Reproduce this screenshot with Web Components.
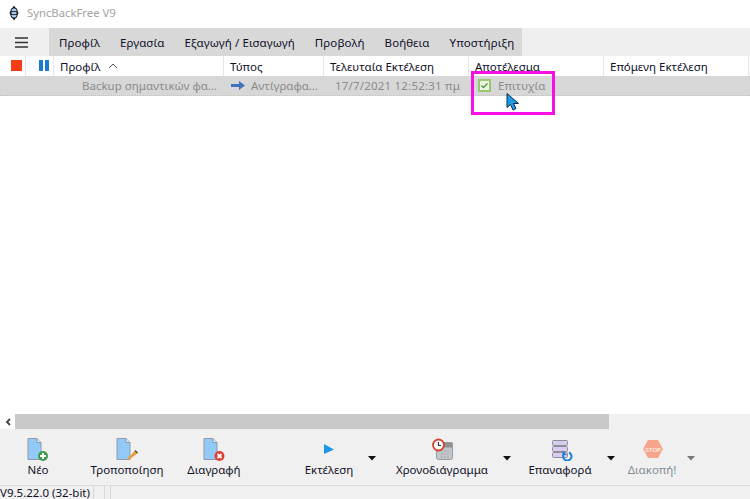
<!DOCTYPE html>
<html lang="el">
<head>
<meta charset="utf-8">
<title>SyncBackFree V9</title>
<style>
  html, body { margin: 0; height: 100%; }
  body {
    width: 750px;
    height: 499px;
    overflow: hidden;
    background: #fff;
    font-family: "Noto Sans", "Open Sans", sans-serif;
    font-size: 11.5px;
    color: #10102a;
  }
  sb-app { height: 499px; }
</style>
</head>
<body>
<sb-app>
  <sb-titlebar slot="top">SyncBackFree V9</sb-titlebar>
  <sb-menubar slot="top">
    <span>Προφίλ</span><span>Εργασία</span><span>Εξαγωγή / Εισαγωγή</span><span>Προβολή</span><span>Βοήθεια</span><span>Υποστήριξη</span>
  </sb-menubar>
  <sb-listheader slot="top"></sb-listheader>
  <sb-listrow slot="top"></sb-listrow>

  <sb-scrollbar slot="bottom"></sb-scrollbar>
  <sb-toolbar slot="bottom">
    <sb-toolbutton icon="new" style="--w:76px">Νέο</sb-toolbutton>
    <sb-toolbutton icon="edit" style="--w:102px">Τροποποίηση</sb-toolbutton>
    <sb-toolbutton icon="delete" style="--w:72px">Διαγραφή</sb-toolbutton>
    <sb-toolbutton icon="run" caret style="--w:66px;--ml:46px;--cm:2px">Εκτέλεση</sb-toolbutton>
    <sb-toolbutton icon="schedule" caret style="--w:112px;--ml:6px;--cm:1px">Χρονοδιάγραμμα</sb-toolbutton>
    <sb-toolbutton icon="restore" caret style="--w:80px;--ml:5px;--cm:3px">Επαναφορά</sb-toolbutton>
    <sb-toolbutton icon="stop" caret disabled style="--w:56px;--ml:5px;--cm:3px">Διακοπή!</sb-toolbutton>
  </sb-toolbar>
  <sb-statusbar slot="bottom">V9.5.22.0 (32-bit)</sb-statusbar>

  <sb-highlight slot="over"></sb-highlight>
</sb-app>

<script>
class SbApp extends HTMLElement {
  constructor() {
    super();
    this.attachShadow({ mode: 'open' }).innerHTML = `
      <style>
        :host { display: flex; flex-direction: column; position: relative; overflow: hidden; }
        .list { flex: 1; background: #fff; }
      </style>
      <slot name="top"></slot>
      <div class="list"></div>
      <slot name="bottom"></slot>
      <slot name="over"></slot>
    `;
  }
}

class SbTitlebar extends HTMLElement {
  constructor() {
    super();
    this.attachShadow({ mode: 'open' }).innerHTML = `
      <style>
        :host { display: flex; align-items: center; height: 28px; padding: 0 0 3px 9px; box-sizing: border-box; gap: 8px; color: #a2a2a2; background: #fff; font-size: 11.3px; }
        svg { display: block; }
      </style>
      <svg width="10" height="16" viewBox="0 0 10 16">
        <path d="M5 0.500 9.500 8 5 15.500 0.500 8z" fill="#111"/>
        <rect x="2" y="3" width="6" height="10" rx="2.500" fill="#a4c8ec" stroke="#111"/>
        <path d="M2 6.500h6M2 9.500h6" stroke="#111" stroke-width="0.800"/>
      </svg>
      <slot></slot>
    `;
  }
}

class SbMenubar extends HTMLElement {
  constructor() {
    super();
    this.attachShadow({ mode: 'open' }).innerHTML = `
      <style>
        :host { display: flex; height: 28px; background: #efefef; }
        .burger { width: 49px; display: flex; align-items: center; justify-content: center; padding-right: 7px; box-sizing: border-box; }
        .tabs { width: 473px; background: #d8d8d8; display: flex; align-items: center; padding-left: 10px; box-sizing: border-box; gap: 20px; letter-spacing: 0.1px; white-space: nowrap; }
        svg { display: block; }
      </style>
      <div class="burger">
        <svg width="13" height="11" viewBox="0 0 13 11"><path d="M0 1h13M0 5.500h13M0 10h13" stroke="#333" stroke-width="1.600"/></svg>
      </div>
      <div class="tabs"><slot></slot></div>
    `;
  }
}

class SbListheader extends HTMLElement {
  constructor() {
    super();
    this.attachShadow({ mode: 'open' }).innerHTML = `
      <style>
        :host { display: grid; grid-template-columns: 26px 28px 170px 100px 145px 135px 145px 1fr; height: 20px; background: #fff; }
        div { display: flex; align-items: center; border-right: 1px solid #e6e6e6; padding-left: 6px; box-sizing: border-box; white-space: nowrap; }
        .mark { padding: 0 0 2px 11px; }
        .pause { padding-left: 13px; }
        svg { display: block; }
        .sort { margin-left: 8px; }
      </style>
      <div class="mark"><svg width="11" height="11"><rect width="11" height="11" fill="#f63c14"/></svg></div>
      <div class="mark pause"><svg width="10" height="11"><path d="M0 0h4v11H0zM6 0h4v11H6z" fill="#1b7ad2"/></svg></div>
      <div>Προφίλ<svg class="sort" width="10" height="6" viewBox="0 0 10 6"><path d="M1 5 5 1l4 4" fill="none" stroke="#555"/></svg></div>
      <div>Τύπος</div>
      <div>Τελευταία Εκτέλεση</div>
      <div>Αποτέλεσμα</div>
      <div>Επόμενη Εκτέλεση</div>
    `;
  }
}

class SbListrow extends HTMLElement {
  constructor() {
    super();
    this.attachShadow({ mode: 'open' }).innerHTML = `
      <style>
        :host { display: grid; grid-template-columns: 224px 100px 145px 281px; height: 20px; box-sizing: border-box; background: #d7d7d7; border-bottom: 1px dotted #c4c4c4; color: #8b8b8b; }
        div { display: flex; align-items: center; white-space: nowrap; padding-bottom: 1px; box-sizing: border-box; }
        .name { padding-left: 82px; }
        .type { padding-left: 7px; gap: 6px; }
        .date { padding-left: 11px; letter-spacing: 0.2px; }
        .res { padding-left: 9px; gap: 7px; }
        svg { display: block; }
      </style>
      <div class="name">Backup σημαντικών φα...</div>
      <div class="type"><svg width="14" height="9" viewBox="0 0 14 9"><path d="M0 3h8V0l6 4.500L8 9V6H0z" fill="#3f74bd"/></svg>Αντίγραφα...</div>
      <div class="date">17/7/2021 12:52:31 πμ</div>
      <div class="res"><svg width="13" height="13" viewBox="0 0 13 13"><rect x="1" y="1" width="11" height="11" fill="#eef5e6" stroke="#9cc56f" stroke-width="2"/><path d="M3.500 6.500 5.500 8.500 9.500 4.500" fill="none" stroke="#4f9a3c" stroke-width="1.400"/></svg>Επιτυχία</div>
    `;
  }
}

class SbScrollbar extends HTMLElement {
  constructor() {
    super();
    this.attachShadow({ mode: 'open' }).innerHTML = `
      <style>
        :host { display: flex; height: 15px; background: #f0f0f0; }
        .btn { width: 15px; display: flex; align-items: center; justify-content: center; background: #fff; }
        .thumb { width: 594px; background: #c9c9c9; }
        svg { display: block; }
      </style>
      <div class="btn"><svg width="6" height="8" viewBox="0 0 6 8"><path d="M5 1 2 4l3 3" fill="none" stroke="#444" stroke-width="1.800"/></svg></div>
      <div class="thumb"></div>
    `;
  }
}

class SbToolbar extends HTMLElement {
  constructor() {
    super();
    this.attachShadow({ mode: 'open' }).innerHTML = `
      <style>
        :host { display: flex; height: 57px; background: #f0f0f0; box-sizing: border-box; border-bottom: 1px solid #dcdcdc; }
      </style>
      <slot></slot>
    `;
  }
}

const docIcon = (badge) => `
  <svg width="26" height="24" viewBox="-3.500 0 26 24">
    <path d="M-0.500 1.500h9l4 4v17h-13z" fill="#92c9f7" stroke="#8f9bab"/>
    <path d="M8.500 1.500v4h4" fill="#dcecfa" stroke="#8f9bab"/>
    ${badge}
  </svg>`;

const ICONS = {
  new: docIcon('<circle cx="14.500" cy="19" r="5" fill="#3f9b4a"/><path d="M14.500 16v6M11.500 19h6" stroke="#fff" stroke-width="2"/>'),
  edit: docIcon('<path d="M17.500 13.500 20 16 12 22.500 9 23z" fill="#ef9a2d"/><path d="M17.500 13.500 20 16" stroke="#555" stroke-width="1.500"/>'),
  delete: docIcon('<circle cx="15" cy="19" r="5" fill="#e33b30"/><path d="M13 17l4 4M17 17l-4 4" stroke="#fff" stroke-width="1.800"/>'),
  run: `<svg width="26" height="24" viewBox="0 0 26 24"><path d="M8 7l10 5.500L8 17z" fill="#1e96e8"/></svg>`,
  schedule: `<svg width="26" height="24" viewBox="0 0 26 24">
    <rect x="7.500" y="5.500" width="16" height="17" rx="2" fill="#c2c7cc" stroke="#9a9a9a"/>
    <rect x="7.500" y="5.500" width="16" height="5" fill="#8e9296"/>
    <path d="M12 14h9M12 17h9M12 20h9" stroke="#9fa4a9" stroke-dasharray="2 1"/>
    <circle cx="9.500" cy="8" r="5.500" fill="#fff" stroke="#d8432b" stroke-width="1.800"/>
    <path d="M9.500 5v3.500H12" fill="none" stroke="#333" stroke-width="1.200"/>
  </svg>`,
  restore: `<svg width="26" height="24" viewBox="0 0 26 24">
    <g fill="#d8cdf0" stroke="#8f8f98"><rect x="5.500" y="3.500" width="15" height="5" rx="1"/><rect x="5.500" y="9.500" width="15" height="5" rx="1"/><rect x="5.500" y="15.500" width="15" height="5" rx="1"/></g>
    <path d="M22 15.500a4.200 4.200 0 1 1-5.500 2" fill="none" stroke="#1e7fd6" stroke-width="2"/>
    <path d="M15.500 13.500v4.500h4.500z" fill="#1e7fd6"/>
  </svg>`,
  stop: `<svg width="26" height="24" viewBox="0 0 26 24">
    <path d="M9 3h10l5 9-5 9H9L4 12z" fill="#f5a58c"/>
    <text x="14" y="14.500" text-anchor="middle" font-family="Liberation Sans, sans-serif" font-size="6" font-weight="700" fill="#fde8d8">STOP</text>
  </svg>`
};

class SbToolbutton extends HTMLElement {
  constructor() {
    super();
    const icon = ICONS[this.getAttribute('icon')] || '';
    const caret = this.hasAttribute('caret')
      ? `<svg class="caret" width="16" height="5" viewBox="0 0 16 5"><path d="M4 0h8L8 4.500z"/></svg>` : '';
    this.attachShadow({ mode: 'open' }).innerHTML = `
      <style>
        :host { display: flex; margin-left: var(--ml, 0); }
        :host([disabled]) { color: #7f8d99; }
        :host([disabled]) .caret { fill: #777; }
        .main { width: var(--w); display: flex; flex-direction: column; align-items: center; padding-top: 8px; box-sizing: border-box; white-space: nowrap; }
        .icon { height: 24px; }
        .label { line-height: 17px; }
        svg { display: block; }
        .caret { fill: #111; margin: 27px 0 0 var(--cm, 0); }
      </style>
      <div class="main"><div class="icon">${icon}</div><div class="label"><slot></slot></div></div>
      ${caret}
    `;
  }
}

class SbStatusbar extends HTMLElement {
  constructor() {
    super();
    this.attachShadow({ mode: 'open' }).innerHTML = `
      <style>
        :host { display: flex; height: 13px; background: #f0f0f0; line-height: 13px; white-space: nowrap; }
        .panel { width: 93px; border-right: 1px solid #d8d8d8; box-sizing: content-box; }
        .gap { width: 10px; border-right: 1px solid #d8d8d8; }
        .gap.small { width: 5px; }
      </style>
      <div class="panel"><slot></slot></div>
      <div class="gap"></div>
      <div class="gap small"></div>
    `;
  }
}

class SbHighlight extends HTMLElement {
  constructor() {
    super();
    this.attachShadow({ mode: 'open' }).innerHTML = `
      <style>
        :host { display: block; position: absolute; left: 471px; top: 71px; width: 84px; height: 44px; box-sizing: border-box; border: 3px solid #f80fe6; }
        svg { position: absolute; left: 32px; top: 19px; display: block; }
      </style>
      <svg width="15" height="18" viewBox="0 0 15 18">
        <path d="M1 0.500v14l3.500-3 2.500 5.500 3-1.500-2.500-5h5z" fill="#1e9be8" stroke="#0b2a44" stroke-width="1"/>
      </svg>
    `;
  }
}

customElements.define('sb-app', SbApp);
customElements.define('sb-titlebar', SbTitlebar);
customElements.define('sb-menubar', SbMenubar);
customElements.define('sb-listheader', SbListheader);
customElements.define('sb-listrow', SbListrow);
customElements.define('sb-scrollbar', SbScrollbar);
customElements.define('sb-toolbar', SbToolbar);
customElements.define('sb-toolbutton', SbToolbutton);
customElements.define('sb-statusbar', SbStatusbar);
customElements.define('sb-highlight', SbHighlight);
</script>
</body>
</html>
